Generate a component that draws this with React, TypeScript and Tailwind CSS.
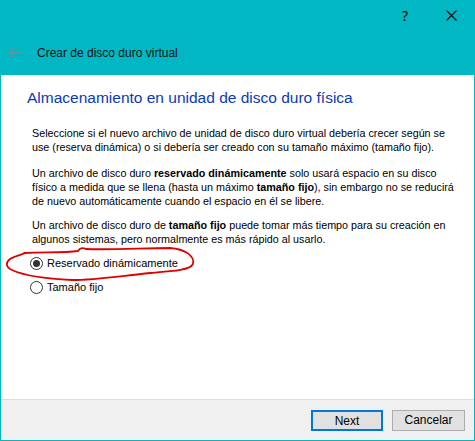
import React from 'react'

const body = { fontFamily: '"Liberation Sans", Arial, sans-serif' }

const Radio = ({ checked, label }: { checked?: boolean; label: string }) => {
  return (
    <div className="flex h-[24px] items-center">
      <span className="ml-[29px] flex h-[13px] w-[13px] items-center justify-center rounded-full border border-[#333333] bg-white">
        {checked && <span className="h-[7px] w-[7px] rounded-full bg-[#333333]" />}
      </span>
      <span className="ml-[4px] text-[11px] text-black">{label}</span>
    </div>
  )
}

const App = () => {
  return (
    <div className="relative flex h-[441px] w-[475px] flex-col overflow-hidden bg-[#00b7c3]" style={body}>
      {/* title bar */}
      <div className="flex h-[30px] items-center justify-end">
        <span className="mr-[38px] text-[14px] text-black" style={{ fontFamily: '"Noto Sans", sans-serif' }}>?</span>
        <svg width="11" height="11" viewBox="0 0 11 11" className="mr-[18px]">
          <path d="M0.5 0.5 L10.5 10.5 M10.5 0.5 L0.5 10.5" stroke="#111" strokeWidth="1.1" />
        </svg>
      </div>
      <div className="flex h-[45px] items-start pt-[16px]">
        <svg width="14" height="12" viewBox="0 0 14 12" className="ml-[8px] mt-[1px]">
          <path d="M6 1 L1 6 L6 11 M1 6 L13.5 6" fill="none" stroke="#7c8c8e" strokeWidth="1.4" />
        </svg>
        <span className="ml-[15px] text-[12px] leading-[14px] text-[#101010]">Crear de disco duro virtual</span>
      </div>

      {/* content */}
      <div className="mx-[1px] flex-1 bg-white pt-[12px]">
        <div className="ml-[26px] text-[15.5px] leading-[22px] text-[#0a3ab8]">
          Almacenamiento en unidad de disco duro física
        </div>
        <div className="ml-[31px] mt-[17px] whitespace-nowrap text-[10.75px] leading-[14px] text-black">
          <p>
            Seleccione si el nuevo archivo de unidad de disco duro virtual debería crecer según se
            <br />
            use (reserva dinámica) o si debería ser creado con su tamaño máximo (tamaño fijo).
          </p>
          <p className="mt-[12px]">
            Un archivo de disco duro <b>reservado dinámicamente</b> solo usará espacio en su disco
            <br />
            físico a medida que se llena (hasta un máximo <b>tamaño fijo</b>), sin embargo no se reducirá
            <br />
            de nuevo automáticamente cuando el espacio en él se libere.
          </p>
          <p className="mt-[10px]">
            Un archivo de disco duro de <b>tamaño fijo</b> puede tomar más tiempo para su creación en
            <br />
            algunos sistemas, pero normalmente es más rápido al usarlo.
          </p>
        </div>
        <div className="mt-[5px]">
          <Radio checked label="Reservado dinámicamente" />
          <Radio label="Tamaño fijo" />
        </div>
      </div>

      {/* footer */}
      <div className="mx-[1px] mb-[1px] flex h-[41px] items-center justify-end gap-[9px] border-t border-[#dfdfdf] bg-[#f0f0f0] pr-[9px]">
        <button className="h-[21px] w-[72px] border-2 border-[#0078d7] bg-[#e1e1e1] text-[12px] text-black">Next</button>
        <button className="h-[21px] w-[73px] border border-[#adadad] bg-[#e1e1e1] text-[12px] text-black">Cancelar</button>
      </div>

      {/* hand drawn annotation */}
      <svg className="pointer-events-none absolute left-0 top-0" width="475" height="441" viewBox="0 0 475 441">
        <path
          d="M24 253 C45 252 65 253 78 251 C80 248 82 247 86 249 C110 250 145 248 170 248 C185 249 195 256 193 264 C190 270 175 271 150 273 C120 276 95 280 72 280 C50 279 25 276 12 270 C5 267 6 262 10 259 C15 256 20 255 26 253"
          fill="none"
          stroke="#e00000"
          strokeWidth="1.8"
          strokeLinecap="round"
        />
      </svg>
    </div>
  )
}

export default App
